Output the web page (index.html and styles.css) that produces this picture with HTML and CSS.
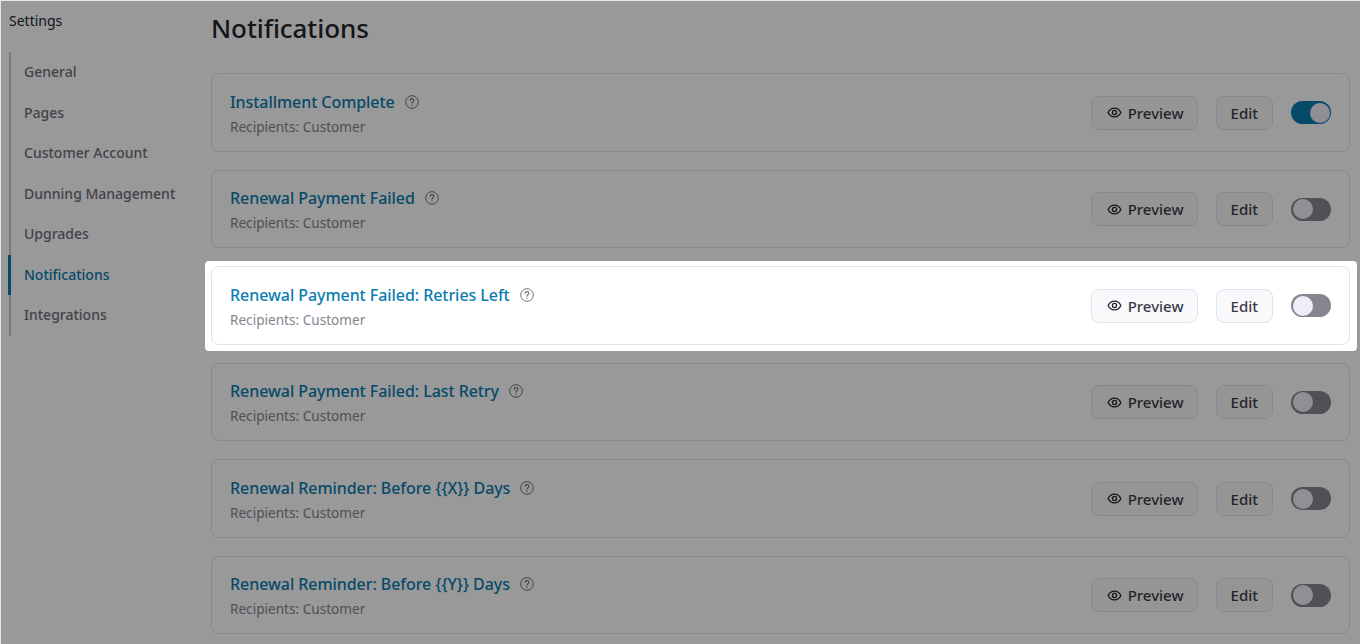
FILE: index.html
```html
<!DOCTYPE html>
<html lang="en">
<head>
  <meta charset="UTF-8">
  <title>Notifications</title>
  <link rel="stylesheet" href="styles.css">
</head>
<body>
  <svg class="defs" width="0" height="0">
    <symbol id="eye" viewBox="0 0 16 16">
      <path d="M1.2 8C2.6 5 5 3.3 8 3.3S13.400 5 14.800 8C13.400 11 11 12.700 8 12.700S2.600 11 1.200 8Z" fill="none" stroke="currentColor" stroke-width="1.400" stroke-linejoin="round"/>
      <circle cx="8" cy="8" r="2.200" fill="none" stroke="currentColor" stroke-width="1.400"/>
    </symbol>
    <symbol id="help" viewBox="0 0 14 14">
      <circle cx="7" cy="7" r="6.300" fill="none" stroke="currentColor" stroke-width="1"/>
      <path d="M5.100 5.400C5.200 4.200 6 3.600 7 3.600C8.100 3.600 8.900 4.300 8.900 5.300C8.900 6.600 7 6.800 7 8.300" fill="none" stroke="currentColor" stroke-width="1.100" stroke-linecap="round"/>
      <circle cx="7" cy="10.200" r=".7" fill="currentColor"/>
    </symbol>
  </svg>

  <div class="page">
    <aside class="sidebar">
      <div class="sidebar-title">Settings</div>
      <nav class="side-nav">
        <a class="side-link">General</a>
        <a class="side-link">Pages</a>
        <a class="side-link">Customer Account</a>
        <a class="side-link">Dunning Management</a>
        <a class="side-link">Upgrades</a>
        <a class="side-link active">Notifications</a>
        <a class="side-link">Integrations</a>
      </nav>
    </aside>

    <main class="content">
      <h1>Notifications</h1>
      <div class="cards">
        <div class="card">
          <div class="card-text">
            <div class="card-title">Installment Complete <svg class="help"><use href="#help"/></svg></div>
            <div class="card-sub">Recipients: Customer</div>
          </div>
          <button class="btn btn-preview"><svg class="eye"><use href="#eye"/></svg>Preview</button>
          <button class="btn">Edit</button>
          <span class="toggle on"></span>
        </div>
        <div class="card">
          <div class="card-text">
            <div class="card-title">Renewal Payment Failed <svg class="help"><use href="#help"/></svg></div>
            <div class="card-sub">Recipients: Customer</div>
          </div>
          <button class="btn btn-preview"><svg class="eye"><use href="#eye"/></svg>Preview</button>
          <button class="btn">Edit</button>
          <span class="toggle"></span>
        </div>
        <div class="spotlight">
          <div class="card">
            <div class="card-text">
              <div class="card-title">Renewal Payment Failed: Retries Left <svg class="help"><use href="#help"/></svg></div>
              <div class="card-sub">Recipients: Customer</div>
            </div>
            <button class="btn btn-preview"><svg class="eye"><use href="#eye"/></svg>Preview</button>
            <button class="btn">Edit</button>
            <span class="toggle"></span>
          </div>
        </div>
        <div class="card">
          <div class="card-text">
            <div class="card-title">Renewal Payment Failed: Last Retry <svg class="help"><use href="#help"/></svg></div>
            <div class="card-sub">Recipients: Customer</div>
          </div>
          <button class="btn btn-preview"><svg class="eye"><use href="#eye"/></svg>Preview</button>
          <button class="btn">Edit</button>
          <span class="toggle"></span>
        </div>
        <div class="card">
          <div class="card-text">
            <div class="card-title">Renewal Reminder: Before {{X}} Days <svg class="help"><use href="#help"/></svg></div>
            <div class="card-sub">Recipients: Customer</div>
          </div>
          <button class="btn btn-preview"><svg class="eye"><use href="#eye"/></svg>Preview</button>
          <button class="btn">Edit</button>
          <span class="toggle"></span>
        </div>
        <div class="card">
          <div class="card-text">
            <div class="card-title">Renewal Reminder: Before {{Y}} Days <svg class="help"><use href="#help"/></svg></div>
            <div class="card-sub">Recipients: Customer</div>
          </div>
          <button class="btn btn-preview"><svg class="eye"><use href="#eye"/></svg>Preview</button>
          <button class="btn">Edit</button>
          <span class="toggle"></span>
        </div>
      </div>
    </main>
  </div>
</body>
</html>
```

FILE: styles.css
```css
html, body { margin: 0; height: 100%; overflow: hidden; background: #e6e6e6; }
body { font-family: "Noto Sans", sans-serif; color: #24242c; }
.defs { position: absolute; }

.page {
  display: flex;
  height: 643px;
  margin: 1px 0 0 1px;
  overflow: hidden;
  background: #fff;
}

.sidebar { width: 210px; flex: none; padding: 10px 0 0 8px; box-sizing: border-box; }
.sidebar-title { font-size: 14px; line-height: 20px; color: #24242c; }
.side-nav { display: flex; flex-direction: column; margin-top: 21px; border-left: 2px solid #c9c9d2; }
.side-link { height: 40.5px; line-height: 39px; margin-left: -3px; padding-left: 13px; border-left: 3px solid transparent; font-size: 14px; font-weight: 500; color: #6f6f7c; }
.side-link.active { border-left-color: #0a7cb0; color: #0a7cb0; }

.content { flex: 1; padding: 9px 10px 0 0; min-width: 0; }
h1 { margin: 0; font-size: 26px; line-height: 37px; font-weight: 500; letter-spacing: -.08px; color: #24242c; }
.cards { display: flex; flex-direction: column; gap: 18px; margin-top: 26px; }

.card {
  display: flex;
  align-items: center;
  height: 78.5px;
  box-sizing: border-box;
  padding: 1px 18px 0;
  background: #fff;
  border: 1px solid #e4e2f0;
  border-radius: 8px;
}
.card-text { flex: 1; padding-top: .5px; }
.card-title { display: flex; align-items: center; gap: 10px; font-size: 16px; line-height: 24px; font-weight: 500; letter-spacing: -.06px; color: #0a7cb0; }
.card-sub { font-size: 13.6px; line-height: 20px; margin-top: 3px; color: #85858f; }
.help { width: 14px; height: 14px; color: #71717c; }

.btn {
  display: flex;
  align-items: center;
  gap: 6px;
  height: 34px;
  margin-right: 18px;
  padding: 0 14px;
  font: 500 15px "Noto Sans", sans-serif;
  color: #3c3c46;
  background: #f9f9fb;
  border: 1px solid #e4e2f0;
  border-radius: 8px;
}
.btn-preview { padding: 0 13px 0 15px; }
.eye { width: 15px; height: 15px; color: #24242c; }

.toggle { position: relative; width: 40px; height: 23px; border-radius: 12px; background: #868691; }
.toggle::after { content: ""; position: absolute; left: 1.5px; top: 1.5px; width: 20px; height: 20px; border-radius: 50%; background: #eeeef8; }
.toggle.on { background: #0a7cb0; }
.toggle.on::after { left: 18.5px; }

/* tour highlight: white ring round the card, everything else dimmed */
.spotlight { position: relative; z-index: 1; }
.spotlight::before {
  content: "";
  position: absolute;
  inset: -5px -7px -6px -6px;
  z-index: -1;
  background: #fff;
  border-radius: 4px;
  box-shadow: 0 0 0 2000px rgba(0, 0, 0, .4);
}
```
